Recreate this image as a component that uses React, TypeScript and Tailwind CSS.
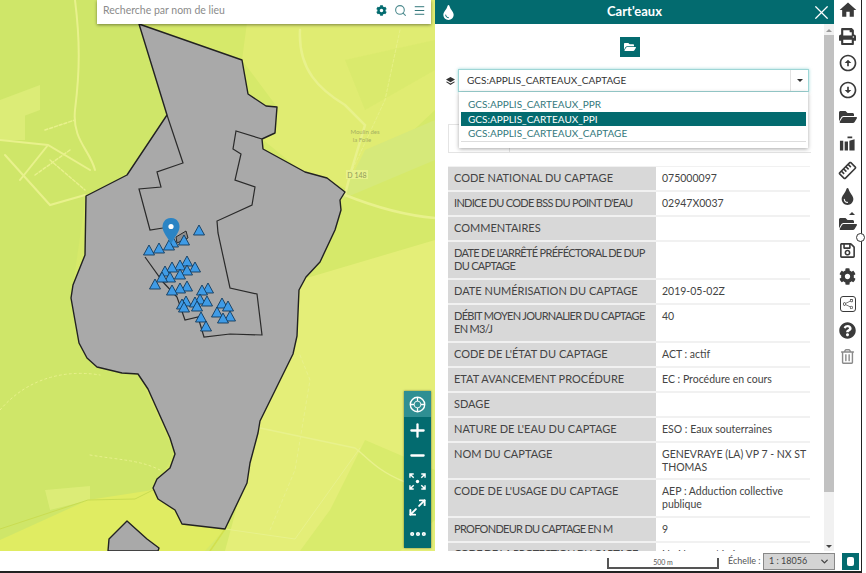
import {
  ChevronDown,
  Ellipsis,
  Maximize2,
  Minus,
  Plus,
  Search,
  Menu,
  X,
} from "lucide-react";
import {
  FaCog,
  FaFolderOpen,
  FaPrint,
  FaQuestionCircle,
  FaRegSave,
  FaTint,
  FaRegTrashAlt,
} from "react-icons/fa";
import { MdHome, MdOutlineArrowCircleUp, MdOutlineArrowCircleDown, MdStraighten } from "react-icons/md";
import { BsShare } from "react-icons/bs";
import type { ReactNode } from "react";

const outer =
  "139,24 242,60 248,94 266,106 277,107 275,133 262,139 263,149 305,172 327,178 345,192 340,200 341,210 335,230 320,262 306,277 299,290 297,336 293,354 260,421 258,433 250,463 247,483 225,529 182,524 175,510 158,499 153,488 157,479 170,468 175,454 170,438 148,389 138,374 122,373 97,367 87,358 79,343 71,298 73,285 85,255 86,196 127,175 167,115";
const innerA = "167,115 183,163 157,172 161,187 139,189 150,230 163,228";
const innerB =
  "145,257 163,282 177,297 185,320 198,317 204,337 230,334 262,335 257,294 230,288 218,233 217,221 252,205 255,187 235,180 241,154 233,149 236,131 262,139";
const lower = "108,551 109,539 127,521 147,539 159,548 158,551";

// triangle centres read off the reference
const wells: [number, number][] = [
  [199, 231], [184, 241], [173, 243], [169, 246], [159, 249], [149, 251],
  [187, 262], [180, 266], [172, 268], [195, 268], [187, 271], [165, 272],
  [180, 275], [170, 278], [162, 278], [155, 285], [187, 287], [180, 289],
  [172, 291], [208, 289], [202, 291], [200, 300], [207, 302], [186, 302],
  [195, 303], [182, 305], [184, 308], [197, 307], [222, 304], [228, 307],
  [217, 313], [230, 317], [223, 319], [201, 318], [206, 327],
];

const rows: { label: string; value?: string; tight?: boolean }[] = [
  { label: "Code national du captage", value: "075000097" },
  { label: "Indice du code BSS du point d'eau", value: "02947X0037", tight: true },
  { label: "Commentaires" },
  { label: "Date de l'arrêté préféctoral de DUP\ndu captage", tight: true },
  { label: "Date numérisation du captage", value: "2019-05-02Z" },
  { label: "Débit moyen journalier du captage\nen m3/j", value: "40", tight: true },
  { label: "Code de l'état du captage", value: "ACT : actif" },
  { label: "Etat avancement procédure", value: "EC : Procédure en cours" },
  { label: "SDAGE" },
  { label: "Nature de l'eau du captage", value: "ESO : Eaux souterraines" },
  { label: "Nom du captage", value: "GENEVRAYE (LA) VP 7 - NX ST\nTHOMAS" },
  { label: "Code de l'usage du captage", value: "AEP : Adduction collective\npublique" },
  { label: "Profondeur du captage en m", value: "9", tight: true },
  { label: "Code de la protection du captage", value: "N : Non protégé", tight: true },
];

function MapLayer() {
  return (
    <svg viewBox="0 0 435 551" className="absolute inset-0 h-full w-full">
      <rect width="435" height="551" fill="#d6e96a" />
      <path d="M0 0H140L167 115L127 175L86 196L73 285L71 298L87 358L138 374L175 454L153 488L135 500L0 540Z" fill="#cfe669" />
      <path d="M250 0H435V110L350 190L300 170L262 139L277 107L242 60Z" fill="#e0ec72" />
      <path d="M300 280L435 240V551H225L260 421Z" fill="#e4ee78" />
      <path d="M0 540L88 500L153 490L225 529L205 551H0Z" fill="#e0ec62" />
      <path d="M340 200L435 160V120L365 150Z" fill="#d6e97a" />
      <path d="M365 440L435 470V520L400 551H300L330 510Z" fill="#d9eb6c" />
      <path d="M0 100L40 85V110L0 125Z M45 490L90 486V500L50 510Z M0 115H25V140H0Z" fill="#dfed7a" opacity="0.8" />
      <path d="M345 60L435 40V70L365 110Z" fill="#d8ea6c" opacity="0.8" />
      <g fill="none" stroke="#e8f18c" strokeLinecap="round">
        <path d="M75 0C80 40 80 70 75 110C72 140 90 150 95 170" strokeWidth="2" />
        <path d="M0 140L48 145L90 170M5 155L50 205L85 195M48 145L20 180" strokeWidth="2" />
        <path d="M45 130L75 120M35 175L70 150M50 160L85 190" strokeWidth="1.5" strokeDasharray="3 2" />
        <path d="M300 30C298 70 320 90 345 105L365 125L350 175L345 195C370 205 400 215 435 218" strokeWidth="2.5" />
        <path d="M400 30L385 100L350 175" strokeWidth="1" strokeDasharray="3 2" opacity="0.8" />
        <path d="M260 428L355 448C365 455 375 470 405 482" strokeWidth="1.5" />
        <path d="M225 529L295 539L360 448" strokeWidth="1" />
        <path d="M300 355L310 380L295 470L270 530" strokeWidth="1" strokeDasharray="3 3" />
        <path d="M0 410C30 375 70 370 100 375" strokeWidth="1" strokeDasharray="2 3" />
        <path d="M90 455C120 460 140 460 160 470" strokeWidth="1" strokeDasharray="2 3" />
      </g>
      <path d="M0 529L88 500L135 499L153 490" fill="none" stroke="#c9dc52" strokeWidth="1" />
      <path d="M182 524L225 529L210 551" fill="none" stroke="#d2e04e" strokeWidth="1.5" />
      <rect x="346" y="170" width="22" height="9" fill="#e8f18c" />
      <text x="357" y="178" textAnchor="middle" fontSize="7" fill="#8f9a5a" fontFamily="Lato, sans-serif">D 148</text>
      <text x="365" y="134" textAnchor="middle" fontSize="6" fill="#a6b060" fontFamily="Lato, sans-serif">Moulin des</text>
      <text x="362" y="142" textAnchor="middle" fontSize="6" fill="#a6b060" fontFamily="Lato, sans-serif">la Folie</text>

      <polygon points={outer} fill="#a9a9a9" stroke="#222" strokeWidth="1.4" strokeLinejoin="round" />
      <polygon points={lower} fill="#a9a9a9" stroke="#222" strokeWidth="1.4" strokeLinejoin="round" />
      <polyline points={innerA} fill="none" stroke="#2a2a2a" strokeWidth="1.2" />
      <polyline points={innerB} fill="none" stroke="#2a2a2a" strokeWidth="1.2" />
      <polygon points="176,237 186,231 188,238 177,243" fill="#8d8d8d" stroke="#2a2a2a" strokeWidth="1" />

      {wells.map(([x, y], i) => (
        <polygon
          key={i}
          points={`${x},${y - 6} ${x + 5.5},${y + 4} ${x - 5.5},${y + 4}`}
          fill="#3f9be6"
          stroke="#123a5c"
          strokeWidth="0.9"
          strokeLinejoin="round"
        />
      ))}

      <path d="M171 218C164 218 162.5 224 162.5 227C162.5 232 168 238 171 244C174 238 179.5 232 179.5 227C179.5 224 178 218 171 218Z" fill="#2b84c4" />
      <circle cx="171" cy="226.5" r="2.6" fill="#fff" />
    </svg>
  );
}

function MapControls() {
  return (
    <div className="absolute top-[391px] left-[404px] flex w-[27px] flex-col items-center bg-[#036b6f] text-white shadow-[0_0_2px_rgba(0,0,0,0.5)]">
      <div className="flex h-[26px] w-full items-center justify-center bg-[#2f8f93]">
        <svg viewBox="0 0 16 16" className="h-[17px] w-[17px]" fill="none" stroke="currentColor">
          <circle cx="8" cy="8" r="6.8" strokeWidth="1.3" />
          <circle cx="8" cy="8" r="3.2" strokeWidth="0.8" />
          <path d="M8 1.5V5M8 11V14.5M1.5 8H5M11 8H14.5" strokeWidth="1.2" />
        </svg>
      </div>
      <div className="flex h-[26px] items-center justify-center"><Plus size={21} strokeWidth={2.6} /></div>
      <div className="flex h-[25px] items-center justify-center"><Minus size={21} strokeWidth={2.6} /></div>
      <div className="flex h-[26px] items-center justify-center">
        <svg viewBox="0 0 18 18" className="h-[17px] w-[17px]" fill="none" stroke="currentColor" strokeWidth="1.5">
          <circle cx="9" cy="9" r="1.8" fill="currentColor" stroke="none" />
          <path d="M1 5V1H5M1 1L5 5M13 1H17V5M17 1L13 5M1 13V17H5M1 17L5 13M13 17H17V13M17 17L13 13" />
        </svg>
      </div>
      <div className="flex h-[26px] items-center justify-center"><Maximize2 size={19} strokeWidth={2.4} /></div>
      <div className="flex h-[28px] items-center justify-center"><Ellipsis size={20} strokeWidth={3} /></div>
    </div>
  );
}

function SearchBar() {
  return (
    <div className="absolute top-0 left-[97px] flex h-6 w-[334px] items-center bg-white pr-[5px] pb-[3px] pl-1.5 shadow-[0_1px_3px_rgba(0,0,0,0.45)]">
      <span className="flex-1 text-[10.5px] text-[#8b8b8b]">Recherche par nom de lieu</span>
      <FaCog size={11} className="mr-[7px] text-[#036b6f]" />
      <Search size={13} strokeWidth={2} className="mr-[6px] text-[#4c8a8e]" />
      <Menu size={13} strokeWidth={1.8} className="text-[#2f7478]" />
    </div>
  );
}

function Panel() {
  return (
    <div className="flex w-[399px] flex-col">
      <div className="relative flex h-6 items-center justify-center bg-[#036b6f] text-white">
        <FaTint size={15} className="absolute left-[6px]" />
        <span className="text-[13px] font-bold">Cart'eaux</span>
        <X size={23} strokeWidth={1.3} className="absolute right-[1px]" />
      </div>
      <div className="flex min-h-0 flex-1">
        <div className="min-w-0 flex-1 overflow-hidden bg-white">
          <div className="flex justify-center pt-[13px]">
            <div className="flex h-5 w-5 items-center justify-center bg-[#036b6f] text-white">
              <FaFolderOpen size={12} />
            </div>
          </div>
          <div className="relative mt-3 ml-[11px] flex items-center">
            <svg viewBox="0 0 10 10" className="mr-[3px] h-[9px] w-[9px] text-[#333]" fill="currentColor">
              <path d="M5 1L10 4L5 7L0 4Z" />
              <path d="M1 6L5 8.4L9 6L10 6.7L5 10L0 6.7Z" />
            </svg>
            <div className="flex h-[23px] w-[351px] items-center border border-[#9ed6d6] bg-white pl-2 text-[10px] text-[#333] shadow-[0_0_3px_rgba(90,190,190,0.6)]">
              <span className="flex-1">GCS:APPLIS_CARTEAUX_CAPTAGE</span>
              <span className="flex h-full w-[18px] items-center justify-center border-l border-[#e2e2e2]">
                <span className="border-x-[3px] border-t-[3px] border-x-transparent border-t-[#333]" />
              </span>
            </div>
            <div className="absolute top-[23px] left-[13px] z-10 w-[349px] bg-white px-0.5 pt-[5px] pb-1.5 text-[10px] leading-[14.5px] text-[#33787c] shadow-[0_1px_4px_rgba(0,0,0,0.35)]">
              <div className="pl-[7px]">GCS:APPLIS_CARTEAUX_PPR</div>
              <div className="bg-[#036b6f] pl-[7px] text-white">GCS:APPLIS_CARTEAUX_PPI</div>
              <div className="border-b border-[#ddd] pl-[7px]">GCS:APPLIS_CARTEAUX_CAPTAGE</div>
            </div>
          </div>

          <div className="mx-[13px] mt-[32px] border-b border-[#e4e4e4]">
            <div className="h-[28px] w-[62px] border-x border-t border-[#e4e4e4]" />
          </div>

          <div className="mt-[13px] ml-[13px] w-[362px] text-[10.5px] leading-[12.9px] text-[#444]">
            {rows.map((r) => (
              <div key={r.label} className="flex border-y border-[#f1f1f1]">
                <div className={`w-[208px] shrink-0 overflow-hidden bg-[#d8d8d8] px-[6px] py-[5px] text-[11px] whitespace-pre uppercase ${r.tight ? "tracking-[-0.7px]" : ""}`}>
                  {r.label}
                </div>
                <div className="min-h-[23px] flex-1 px-[6px] py-[5px] whitespace-pre">{r.value}</div>
              </div>
            ))}
          </div>
        </div>
        <div className="flex w-[10px] flex-col items-center bg-[#f1f1f1]">
          <span className="mt-[5px] mb-[3px] border-x-[3px] border-b-[3px] border-x-transparent border-b-[#9a9a9a]" />
          <div className="h-[457px] w-full bg-[#c1c1c1]" />
          <span className="mt-auto mb-[3px] border-x-[3px] border-t-[3px] border-x-transparent border-t-[#444]" />
        </div>
      </div>
    </div>
  );
}

function SideIcon({ children }: { children: ReactNode }) {
  return <div className="flex h-[17px] w-full items-center justify-center">{children}</div>;
}

function Sidebar() {
  return (
    <div className="relative flex w-[27px] flex-col items-center gap-[9.7px] bg-white pt-[1.5px] text-[#3a3a3a]">
      <SideIcon><MdHome size={20} /></SideIcon>
      <SideIcon><FaPrint size={17} /></SideIcon>
      <SideIcon><MdOutlineArrowCircleUp size={20} /></SideIcon>
      <SideIcon><MdOutlineArrowCircleDown size={20} /></SideIcon>
      <SideIcon><FaFolderOpen size={18} /></SideIcon>
      <SideIcon>
        <svg viewBox="0 0 18 18" className="h-[17px] w-[17px]" fill="currentColor">
          <path d="M1 6H4.5V16.5H1ZM6 7H9.5V16.5H6ZM11 6L16.5 4.5V16.5H11ZM9 1.5H14V3.5H9Z" />
        </svg>
      </SideIcon>
      <SideIcon><MdStraighten size={19} className="-rotate-45" /></SideIcon>
      <SideIcon><FaTint size={17} /></SideIcon>
      <SideIcon>
        <span className="relative">
          <FaFolderOpen size={18} />
          <span className="absolute -top-[3px] right-[2px] border-x-[3px] border-b-[3px] border-x-transparent border-b-[#3a3a3a]" />
        </span>
      </SideIcon>
      <SideIcon><FaRegSave size={17} /></SideIcon>
      <SideIcon><FaCog size={17} /></SideIcon>
      <SideIcon>
        <span className="flex h-[16px] w-[16px] items-center justify-center rounded-[3px] border-[1.5px] border-[#3a3a3a]">
          <BsShare size={10} />
        </span>
      </SideIcon>
      <SideIcon><FaQuestionCircle size={17} /></SideIcon>
      <SideIcon><FaRegTrashAlt size={15} className="text-[#8b8b8b]" /></SideIcon>
      <span className="absolute top-[233px] left-[22px] z-10 h-[9px] w-[9px] rounded-full border border-[#333] bg-white" />
    </div>
  );
}

function BottomBar() {
  return (
    <div className="flex h-5 shrink-0 items-center bg-white text-[#555]">
      <div className="mt-1 ml-[607px] flex h-[11px] w-[112px] shrink-0 items-end justify-center border-x-2 border-b-2 border-[#555] text-[7px] leading-[9px]">
        500 m
      </div>
      <span className="ml-[9px] w-[35px] shrink-0 text-[9px] whitespace-nowrap">Échelle :</span>
      <div className="flex h-[17px] w-[72px] shrink-0 items-center justify-between border border-[#888] bg-[#d4d4d4] pr-1 pl-[5px] text-[9px] text-[#444]">
        1 : 18056
        <ChevronDown size={11} strokeWidth={3} />
      </div>
      <div className="ml-[7px] flex h-[17px] w-[17px] shrink-0 items-center justify-center bg-[#036b6f]">
        <span className="h-[9px] w-[7px] rounded-[2px] bg-white" />
      </div>
    </div>
  );
}

export default function App() {
  return (
    <div className="h-[573px] w-[866px] overflow-hidden bg-white font-['Lato',sans-serif]">
      <div className="flex h-[573px] w-[862px] flex-col border-r border-[#222]">
        <div className="flex h-[551px] shrink-0">
          <div className="relative w-[435px] shrink-0 overflow-hidden">
            <MapLayer />
            <SearchBar />
            <MapControls />
          </div>
          <Panel />
          <Sidebar />
        </div>
        <BottomBar />
        <div className="h-[2px] shrink-0 bg-[#222]" />
      </div>
    </div>
  );
}
